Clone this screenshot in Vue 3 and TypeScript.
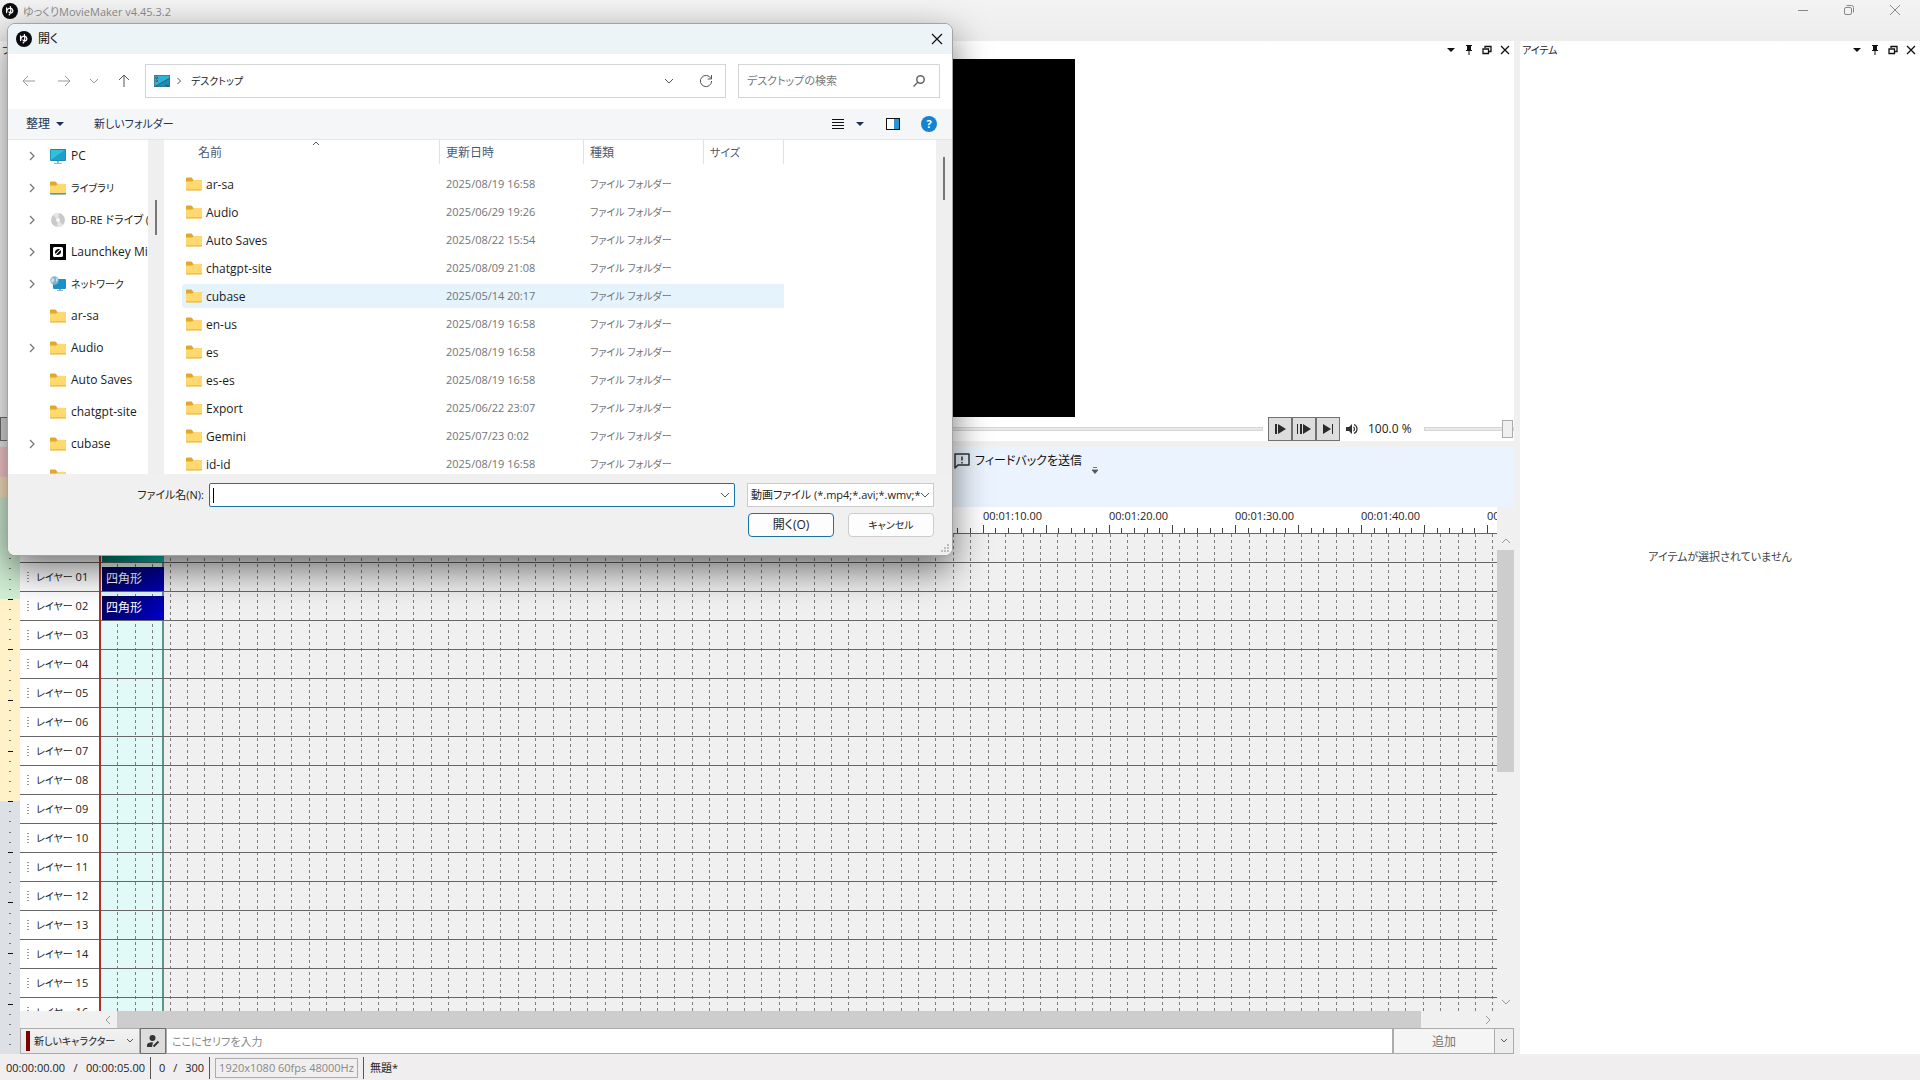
<script setup lang="ts">
import { ref } from 'vue'

interface TreeNode { label: string; icon: string; expandable: boolean; size?: string }
interface FileRow { name: string; date: string }

const tree: TreeNode[] = [
  { label: 'PC', icon: 'pc', expandable: true },
  { label: 'ライブラリ', icon: 'library', expandable: true, size: 'kana' },
  { label: 'BD-RE ドライブ (E:)', icon: 'disc', expandable: true, size: 'mixed' },
  { label: 'Launchkey Mini', icon: 'launchkey', expandable: true },
  { label: 'ネットワーク', icon: 'network', expandable: true, size: 'kana' },
  { label: 'ar-sa', icon: 'folder', expandable: false },
  { label: 'Audio', icon: 'folder', expandable: true },
  { label: 'Auto Saves', icon: 'folder', expandable: false },
  { label: 'chatgpt-site', icon: 'folder', expandable: false },
  { label: 'cubase', icon: 'folder', expandable: true },
  { label: '', icon: 'folder', expandable: false },
]

const files: FileRow[] = [
  { name: 'ar-sa', date: '2025/08/19 16:58' },
  { name: 'Audio', date: '2025/06/29 19:26' },
  { name: 'Auto Saves', date: '2025/08/22 15:54' },
  { name: 'chatgpt-site', date: '2025/08/09 21:08' },
  { name: 'cubase', date: '2025/05/14 20:17' },
  { name: 'en-us', date: '2025/08/19 16:58' },
  { name: 'es', date: '2025/08/19 16:58' },
  { name: 'es-es', date: '2025/08/19 16:58' },
  { name: 'Export', date: '2025/06/22 23:07' },
  { name: 'Gemini', date: '2025/07/23 0:02' },
  { name: 'id-id', date: '2025/08/19 16:58' },
]
const hovered = ref('cubase')

const layers = Array.from({ length: 17 }, (_, i) => String(i).padStart(2, '0'))
const clips: Record<string, { text: string; kind: string }> = {
  '00': { text: '', kind: 'teal' },
  '01': { text: '四角形', kind: 'blue' },
  '02': { text: '四角形', kind: 'blue deep' },
}

// Ruler: one second is 12.61px, labelled every ten seconds
const secondWidth = 12.61
const ticks = Array.from({ length: 112 }, (_, s) => ({
  x: Math.round(80 + s * secondWidth),
  major: s % 5 === 0,
}))
const labels = Array.from({ length: 12 }, (_, i) => {
  const s = i * 10
  const mm = String(Math.floor(s / 60)).padStart(2, '0')
  const ss = String(s % 60).padStart(2, '0')
  return { x: Math.round(80 + s * secondWidth), text: `00:${mm}:${ss}.00` }
})
const gridLines = Array.from({ length: 81 }, (_, i) => Math.round(1 + i * 17.406))

const meterTicks = Array.from({ length: 62 }, (_, i) => ({
  y: Math.round(i * 10.12),
  major: i % 5 === 0,
}))

const fileName = ref('')
const serif = ref('')
</script>

<template>
  <div class="app">
    <header class="titlebar">
      <svg class="logo" viewBox="0 0 16 16"><circle cx="8" cy="8" r="8" fill="#0b0b0d" /><path d="M4.600 5v4.500M4.600 9.500c0-3 2-4.500 4-4.300 2.600.3 3.200 4.600.3 4.800-1.400 0-2-1-2-1M8.400 3.600c.7 3 .6 6-1.200 8.200" fill="none" stroke="#fff" stroke-width="1.300" stroke-linecap="round" /></svg>
      <h1>ゆっくりMovieMaker v4.45.3.2</h1>
      <div class="window-buttons">
        <button aria-label="最小化"><svg viewBox="0 0 12 12"><path d="M1 6.500h10" /></svg></button>
        <button aria-label="元に戻す"><svg viewBox="0 0 12 12"><rect x="1.500" y="3.500" width="7" height="7" rx="1.500" /><path d="M3.500 1.500h5a2 2 0 0 1 2 2v5" /></svg></button>
        <button aria-label="閉じる"><svg viewBox="0 0 12 12"><path d="M1 1l10 10M11 1L1 11" /></svg></button>
      </div>
    </header>

    <main class="workspace">
      <div class="left-side">
        <section class="panel preview">
          <div class="panel-head">
            <h2>プレビュー</h2>
            <button aria-label="メニュー"><svg viewBox="0 0 10 10"><path d="M1 3h8L5 7z" fill="#111" /></svg></button>
            <button aria-label="固定"><svg viewBox="0 0 10 10"><path d="M2 0h6v1H7v4h1v1H2V5h1V1H2zM4.500 6h1v4h-1z" fill="#111" /></svg></button>
            <button aria-label="フロート"><svg viewBox="0 0 10 10"><path d="M3 3V1.500h6v5H7M1 4h5.500v4.500H1z" fill="none" stroke="#111" stroke-width="1.300" /></svg></button>
            <button aria-label="閉じる"><svg viewBox="0 0 10 10"><path d="M1 1l8 8M9 1L1 9" stroke="#111" stroke-width="1.300" /></svg></button>
          </div>
          <div class="stage"><div class="video"></div></div>
          <div class="player">
            <button class="play" aria-label="再生"><svg viewBox="0 0 14 14"><path d="M3 2v10l8-5z" fill="#333" /></svg></button>
            <input class="seek" type="range" min="0" max="300" value="0" aria-label="再生位置" />
            <div class="steps">
              <button class="play" aria-label="次のフレーム"><svg viewBox="0 0 14 14"><path d="M2 2h2v10H2zM5 2l8 5-8 5z" fill="#2b2b2b" /></svg></button>
              <button class="play" aria-label="早送り"><svg viewBox="0 0 14 14"><path d="M0 2h1v10H0zM3 2h2v10H3zM6 2l8 5-8 5z" fill="#2b2b2b" /></svg></button>
              <button class="play" aria-label="末尾へ"><svg viewBox="0 0 14 14"><path d="M2 2l8 5-8 5zM11 2h1v10h-1z" fill="#2b2b2b" /></svg></button>
            </div>
            <svg class="speaker" viewBox="0 0 12 12"><path d="M0 4h3l3-3v10L3 8H0z" fill="#333" /><path d="M7.500 4c1.300 1 1.300 3 0 4M8 1.500c4 1.500 4 7.500 0 9" fill="none" stroke="#333" stroke-width="1.200" /></svg>
            <span class="volume-text">100.0 %</span>
            <input class="volume" type="range" min="0" max="100" value="100" aria-label="音量" />
          </div>
        </section>

        <section class="timeline">
          <div class="meter">
            <div class="band pink"></div>
            <div class="band orange"></div>
            <div class="band green"></div>
            <div class="band yellow"></div>
            <div class="band gray"></div>
            <svg class="meter-ticks"><line v-for="t in meterTicks" :key="t.y" :x1="t.major ? 8 : 9" :x2="t.major ? 13 : 11" :y1="t.y + 0.5" :y2="t.y + 0.5" :stroke="t.major ? '#111' : '#777'" /></svg>
          </div>
          <div class="timeline-body">
            <div class="toolbar">
              <button class="feedback">
                <svg viewBox="0 0 16 16"><path d="M1 15V1h14v11H4z" fill="none" stroke="#333" stroke-width="1.500" stroke-linejoin="round" /><path d="M8 3.500v4M8 9v1.500" stroke="#333" stroke-width="1.500" /></svg>
                フィードバックを送信
              </button>
              <svg class="overflow" viewBox="0 0 6 7"><path d="M1 .5h4M0 3h6L3 6.500z" stroke="#555" stroke-width=".8" fill="#555" /></svg>
            </div>
            <div class="track-area">
              <div class="tracks">
                <svg class="ruler">
                  <text v-for="l in labels" :key="l.text" :x="l.x" y="13">{{ l.text }}</text>
                  <line v-for="t in ticks" :key="t.x" :x1="t.x + 0.5" :x2="t.x + 0.5" :y1="t.major ? 18 : 21" y2="26" stroke="#444" />
                </svg>
                <div class="layers">
                  <svg class="grid">
                    <rect x="2" y="0" width="62" height="100%" fill="#e1faf8" />
                    <line v-for="x in gridLines" :key="x" :x1="x + 0.5" :x2="x + 0.5" y1="0" y2="100%" stroke="#7d7d7d" stroke-dasharray="3 3" />
                    <rect x="63" y="0" width="2" height="100%" fill="#5d948c" />
                  </svg>
                  <div v-for="n in layers" :key="n" class="layer">
                    <div class="layer-label"><span class="grip"><i></i><i></i><i></i><i></i></span><span class="kana">レイヤー</span><span>{{ n }}</span></div>
                    <div class="lane"><div v-if="clips[n]" class="clip" :class="clips[n].kind">{{ clips[n].text }}</div></div>
                  </div>
                  <div class="playhead"></div>
                </div>
              </div>
              <div class="vscroll">
                <svg viewBox="0 0 10 10"><path d="M1 7l4-4 4 4" /></svg>
                <div class="vthumb"></div>
                <div class="fill"></div>
                <svg viewBox="0 0 10 10"><path d="M1 3l4 4 4-4" /></svg>
              </div>
            </div>
            <div class="hscroll">
              <svg viewBox="0 0 10 10"><path d="M7 1L3 5l4 4" /></svg>
              <div class="hthumb"></div>
              <svg viewBox="0 0 10 10"><path d="M3 1l4 4-4 4" /></svg>
            </div>
            <form class="serif-row" @submit.prevent>
              <button type="button" class="character"><i class="swatch"></i><span class="kana">新しいキャラクター</span><svg viewBox="0 0 8 8"><path d="M1 2l3 3 3-3" /></svg></button>
              <button type="button" class="edit-character" aria-label="キャラクター編集"><svg viewBox="0 0 14 14"><circle cx="6.500" cy="4" r="3" fill="#333" /><path d="M1 13V11c0-2 3-3 6-2.700L6 13z" fill="#333" /><path d="M7.500 12.500l5-5" stroke="#333" stroke-width="2" /></svg></button>
              <input v-model="serif" type="text" placeholder="ここにセリフを入力" aria-label="セリフ" />
              <button class="add">追加</button>
              <button type="button" class="add-more" aria-label="追加メニュー"><svg viewBox="0 0 8 8"><path d="M1 2l3 3 3-3" /></svg></button>
            </form>
          </div>
        </section>
      </div>

      <aside class="panel items">
        <div class="panel-head">
          <h2>アイテム</h2>
          <button aria-label="メニュー"><svg viewBox="0 0 10 10"><path d="M1 3h8L5 7z" fill="#111" /></svg></button>
          <button aria-label="固定"><svg viewBox="0 0 10 10"><path d="M2 0h6v1H7v4h1v1H2V5h1V1H2zM4.500 6h1v4h-1z" fill="#111" /></svg></button>
          <button aria-label="フロート"><svg viewBox="0 0 10 10"><path d="M3 3V1.500h6v5H7M1 4h5.500v4.500H1z" fill="none" stroke="#111" stroke-width="1.300" /></svg></button>
          <button aria-label="閉じる"><svg viewBox="0 0 10 10"><path d="M1 1l8 8M9 1L1 9" stroke="#111" stroke-width="1.300" /></svg></button>
        </div>
        <p class="empty">アイテムが選択されていません</p>
      </aside>
    </main>

    <footer class="status">
      <span class="cell time"><span>00:00:00.00</span><span>/</span><span>00:00:05.00</span></span>
      <span class="cell frames"><span>0</span><span>/</span><span>300</span></span>
      <span class="cell format"><span class="format-box">1920x1080 60fps 48000Hz</span></span>
      <span class="cell project">無題*</span>
    </footer>

    <div class="dialog" role="dialog" aria-label="開く">
      <div class="dialog-title">
        <svg class="logo" viewBox="0 0 16 16"><circle cx="8" cy="8" r="8" fill="#0b0b0d" /><path d="M4.600 5v4.500M4.600 9.500c0-3 2-4.500 4-4.300 2.600.3 3.200 4.600.3 4.800-1.400 0-2-1-2-1M8.400 3.600c.7 3 .6 6-1.200 8.200" fill="none" stroke="#fff" stroke-width="1.300" stroke-linecap="round" /></svg>
        <span>開く</span>
        <button aria-label="閉じる"><svg viewBox="0 0 12 12"><path d="M1 1l10 10M11 1L1 11" stroke="#111" stroke-width="1.200" /></svg></button>
      </div>

      <div class="nav">
        <div class="nav-buttons">
          <button aria-label="戻る"><svg class="dim" viewBox="0 0 14 14"><path d="M13 7H1M6 2L1 7l5 5" /></svg></button>
          <button aria-label="進む"><svg class="dim" viewBox="0 0 14 14"><path d="M1 7h12M8 2l5 5-5 5" /></svg></button>
          <button class="recent" aria-label="最近表示した場所"><svg class="dim" viewBox="0 0 14 14"><path d="M3 5l4 4 4-4" /></svg></button>
          <button aria-label="上へ"><svg viewBox="0 0 14 14"><path d="M7 13V1M2 6l5-5 5 5" /></svg></button>
        </div>
        <div class="address">
          <svg class="desk" viewBox="0 0 16 12"><rect width="16" height="12" rx="1" fill="#27b5dc" /><path d="M0 12L16 3v8a1 1 0 0 1-1 1z" fill="#148fc8" /><path d="M2 2h1.500v1.500H2zM2 5h1.500v1.500H2zM11.500 10h1v1h-1zM13.500 10h1v1h-1z" fill="#fff" /></svg>
          <svg class="crumb" viewBox="0 0 6 8"><path d="M1.500 1l3 3-3 3" /></svg>
          <span class="kana">デスクトップ</span>
          <button aria-label="履歴"><svg viewBox="0 0 14 14"><path d="M3 5l4 4 4-4" /></svg></button>
          <button aria-label="更新"><svg viewBox="0 0 14 14"><path d="M12 4.500A5.600 5.600 0 1 0 12.600 7M12.500 1v4H8.600" /></svg></button>
        </div>
        <div class="search">
          <input type="text" placeholder="デスクトップの検索" aria-label="検索" />
          <svg viewBox="0 0 14 14"><circle cx="8.500" cy="5.500" r="3.700" /><path d="M6 8L1.500 12.500" /></svg>
        </div>
      </div>

      <div class="commands">
        <button>整理<svg viewBox="0 0 8 8"><path d="M0 2h8L4 6z" /></svg></button>
        <button class="new-folder">新しいフォルダー</button>
        <span class="fill"></span>
        <button class="view" aria-label="表示"><svg class="lines" viewBox="0 0 12 12"><path d="M0 1.500h12M0 4.500h12M0 7.500h12M0 10.500h12" stroke="#111" /></svg><svg viewBox="0 0 8 8"><path d="M0 2h8L4 6z" /></svg></button>
        <button class="pane" aria-label="プレビュー ウィンドウ"><svg viewBox="0 0 14 12"><rect x=".5" y=".5" width="13" height="11" fill="#fff" stroke="#111" /><rect x="8" y="1" width="5" height="10" fill="#2b93d8" /></svg></button>
        <button class="help" aria-label="ヘルプ">?</button>
      </div>

      <div class="browser">
        <ul class="tree">
          <li v-for="node in tree" :key="node.label">
            <svg class="chev" viewBox="0 0 6 10"><path v-if="node.expandable" d="M1 1l4 4-4 4" /></svg>
            <svg v-if="node.icon === 'folder' || node.icon === 'library'" class="ico" viewBox="0 0 16 16"><path d="M0 2.500a1 1 0 0 1 1-1h4.500L7.500 4H16v3H0z" fill="#e3a72b" /><path d="M0 5.500h6L8 4h7a1 1 0 0 1 1 1v8.500a.8.800 0 0 1-.8.800H.8a.8.800 0 0 1-.8-.8z" fill="#ffd970" /><path d="M0 13.300h16v.4a.8.800 0 0 1-.8.800H.8a.8.800 0 0 1-.8-.8z" :fill="node.icon === 'library' ? '#2187b8' : '#e9b548'" /></svg>
            <svg v-else-if="node.icon === 'pc'" class="ico" viewBox="0 0 16 16"><rect y="1" width="16" height="12" rx="1" fill="#1787b0" /><path d="M.7 12.300V2h14.600z" fill="#2fc0dc" /><path d="M.7 12.300L15.300 2v10.300z" fill="#1f9fce" /><path d="M7 13h2v2h3v1H4v-1h3z" fill="#a9b3ba" /></svg>
            <svg v-else-if="node.icon === 'disc'" class="ico" viewBox="0 0 16 16"><circle cx="8" cy="8" r="7" fill="#c9c9c9" /><path d="M8 8L3 3a7 7 0 0 1 6-2zM8 8l5 5a7 7 0 0 1-6 2z" fill="#e6e6e6" /><circle cx="8" cy="8" r="2" fill="#f8f8f8" /></svg>
            <svg v-else-if="node.icon === 'launchkey'" class="ico" viewBox="0 0 16 16"><rect width="16" height="16" fill="#000" /><rect x="3" y="3" width="10" height="10" rx="1.500" fill="#fff" /><path d="M5 8.500C5 6 7 4.500 10 5l-4.500 5zM11 7.500C11 10 9 11.500 6 11l4.500-5z" fill="#000" /></svg>
            <svg v-else class="ico" viewBox="0 0 16 16"><rect x="3" y="3" width="13" height="10" rx="1" fill="#1c8fc4" /><path d="M9 13h2v1h2v1H7v-1h2z" fill="#9aa8b4" /><circle cx="4.500" cy="4.500" r="4.200" fill="#7fb6cf" /><path d="M2 2c2 0 3 1 2 3L2.500 7 1 5zM6 1l2 3-2 2z" fill="#c9e3ee" /></svg>
            <span :class="node.size">{{ node.label }}</span>
          </li>
        </ul>
        <div class="tree-scroll"><i></i></div>
        <div class="list">
          <svg class="sort" viewBox="0 0 8 5"><path d="M1 4l3-3 3 3" /></svg>
          <table>
            <colgroup><col class="c-name" /><col class="c-date" /><col class="c-type" /><col class="c-size" /></colgroup>
            <thead><tr><th scope="col">名前</th><th scope="col">更新日時</th><th scope="col">種類</th><th scope="col" class="mixed">サイズ</th></tr></thead>
            <tbody>
              <tr v-for="f in files" :key="f.name" :class="{ hover: f.name === hovered }">
                <td class="name"><svg class="ico" viewBox="0 0 16 16"><path d="M0 2.500a1 1 0 0 1 1-1h4.500L7.500 4H16v3H0z" fill="#e3a72b" /><path d="M0 5.500h6L8 4h7a1 1 0 0 1 1 1v8.500a.8.800 0 0 1-.8.800H.8a.8.800 0 0 1-.8-.8z" fill="#ffd970" /><path d="M0 13.300h16v.4a.8.800 0 0 1-.8.800H.8a.8.800 0 0 1-.8-.8z" fill="#e9b548" /></svg>{{ f.name }}</td>
                <td>{{ f.date }}</td>
                <td class="kana">ファイル フォルダー</td>
                <td></td>
              </tr>
            </tbody>
          </table>
        </div>
        <div class="list-scroll"><i></i></div>
      </div>

      <div class="dialog-foot">
        <div class="field-row">
          <label for="file-name">ファイル名(N):</label>
          <div class="combo">
            <i class="caret"></i>
            <input id="file-name" v-model="fileName" type="text" />
            <svg viewBox="0 0 10 10"><path d="M1 3l4 4 4-4" /></svg>
          </div>
          <div class="filter">
            <select aria-label="ファイルの種類"><option>動画ファイル (*.mp4;*.avi;*.wmv;*</option></select>
            <svg viewBox="0 0 10 10"><path d="M1 3l4 4 4-4" /></svg>
          </div>
        </div>
        <div class="actions">
          <button class="primary">開く(O)</button>
          <button class="kana">キャンセル</button>
        </div>
        <svg class="resize" viewBox="0 0 10 10"><path d="M7 0h2v2H7zM4 3h2v2H4zM7 3h2v2H7zM1 6h2v2H1zM4 6h2v2H4zM7 6h2v2H7z" fill="#bdbdbd" /></svg>
      </div>
    </div>
  </div>
</template>

<style>
body { margin: 0; background: #f0f0f0; }
</style>

<style scoped>
.app, .app * { box-sizing: border-box; }
.app {
  position: relative;
  display: flex;
  flex-direction: column;
  height: 100vh;
  overflow: hidden;
  font-family: "Open Sans", "Noto Sans CJK JP", sans-serif;
  font-feature-settings: "palt";
  font-size: 12px;
  line-height: 16px;
  color: #222;
  background: #f0f0f0;
}
h1, h2, p, ul { margin: 0; padding: 0; font-weight: 400; }
ul { list-style: none; }
button, input, select { font: inherit; font-feature-settings: inherit; color: inherit; margin: 0; padding: 0; border: 0; border-radius: 0; background: none; outline: 0; }
svg { display: block; flex: none; }
.fill { flex: 1; }
.logo { width: 16px; height: 16px; }
.app .kana { font-size: 10px; }
.app .mixed { font-size: 11px; }

.titlebar { display: flex; align-items: flex-start; height: 41px; padding: 3px 2px; background: linear-gradient(#f3f3f3, #ededed); }
.titlebar h1 { flex: 1; margin-left: 5px; font-size: 11px; line-height: 18px; color: #8c8c8c; }
.window-buttons { display: flex; }
.window-buttons button { display: flex; justify-content: center; width: 46px; padding-top: 1px; }
.window-buttons svg { width: 12px; height: 12px; fill: none; stroke: #888; }

.workspace { flex: 1; display: flex; gap: 6px; min-height: 0; }
.left-side { flex: 1; display: flex; flex-direction: column; min-width: 0; }
.panel { background: #fff; }
.panel-head { display: flex; align-items: center; gap: 8px; height: 18px; padding: 0 4px 0 2px; }
.panel-head h2 { flex: 1; font-size: 10px; }
.panel-head svg { width: 10px; height: 10px; }
.preview { height: 400px; margin-bottom: 6px; }
.stage { display: flex; justify-content: center; height: 358px; }
.video { aspect-ratio: 16 / 9; background: #000; }
.player { display: flex; align-items: center; height: 24px; }
.play { display: flex; align-items: center; justify-content: center; width: 24px; height: 24px; border: 1px solid #707070; background: #ddd; }
.play svg { width: 14px; height: 14px; }
.steps { display: flex; margin-left: 5px; }
input[type="range"] { appearance: none; height: 18px; }
input[type="range"]::-webkit-slider-runnable-track { height: 4px; border: 1px solid #d6d6d6; background: #e7eaea; }
.seek { flex: 1; min-width: 0; }
.seek::-webkit-slider-thumb { appearance: none; width: 11px; height: 18px; margin-top: -8px; border: 1px solid #acacac; background: #f0f0f0; }
.speaker { width: 12px; height: 12px; margin-left: 6px; }
.volume-text { width: 66px; padding-left: 10px; }
.volume { width: 90px; }
.volume::-webkit-slider-thumb { appearance: none; width: 11px; height: 18px; margin-top: -8px; border: 1px solid #acacac; background: #f0f0f0; }

.timeline { flex: 1; display: flex; min-height: 0; }
.meter { position: relative; display: flex; flex-direction: column; width: 20px; }
.pink { height: 30px; background: #ffcfd0; }
.orange { height: 21px; background: #ffe8c4; }
.green { height: 101px; background: #d2f0d6; }
.yellow { height: 202px; background: #fff1c8; }
.gray { flex: 1; background: #dde1e6; }
.meter-ticks { position: absolute; top: 0; left: 0; width: 20px; height: 100%; }
.timeline-body { flex: 1; display: flex; flex-direction: column; min-width: 0; }
.toolbar { display: flex; align-items: flex-start; height: 60px; padding: 4px 0 0 934px; background: #ebf4fe; }
.feedback { display: flex; align-items: center; gap: 5px; height: 20px; white-space: nowrap; color: #111; }
.feedback svg { width: 16px; height: 16px; }
.overflow { width: 6px; height: 7px; margin: 16px 0 0 10px; }
.track-area { flex: 1; display: flex; min-height: 0; }
.tracks { flex: 1; display: flex; flex-direction: column; min-width: 0; }
.ruler { width: 100%; height: 27px; border-bottom: 1px solid #666; background: #fff; font-size: 11px; fill: #222; }
.layers { position: relative; flex: 1; min-height: 0; overflow: hidden; }
.grid { position: absolute; top: 0; left: 79px; width: calc(100% - 79px); height: 100%; }
.layer { position: relative; display: flex; height: 29px; border-bottom: 1px solid #666; }
.layer-label { display: flex; align-items: center; gap: 3px; width: 79px; padding-left: 7px; background: #fff; font-size: 11px; }
.grip { display: flex; flex-direction: column; gap: 2px; width: 6px; }
.grip i { width: 2px; height: 1px; background: #999; }
.lane { flex: 1; padding: 4px 0 0 3px; }
.clip { width: 62px; height: 24px; padding: 4px; color: #fff; }
.blue { background: linear-gradient(135deg, #000050, #0000b8); }
.deep { background: linear-gradient(135deg, #00004c, #0000d0); }
.teal { background: linear-gradient(90deg, #007a66, #00c8b4); }
.playhead { position: absolute; top: 0; left: 79px; width: 2px; height: 100%; background: #a83232; }
.vscroll { display: flex; flex-direction: column; align-items: center; width: 17px; padding: 29px 0 4px; }
.vscroll svg, .hscroll svg { width: 10px; height: 10px; fill: none; stroke: #999; }
.vthumb { width: 17px; height: 222px; margin-top: 4px; background: #cdcdcd; }
.hscroll { display: flex; align-items: center; height: 17px; padding: 0 21px 0 83px; }
.hthumb { flex: 1; height: 17px; margin: 0 62px 0 4px; background: #cdcdcd; }
.serif-row { display: flex; height: 26px; }
.serif-row svg { fill: none; stroke: #555; stroke-width: 1; }
.character { display: flex; align-items: center; width: 120px; padding: 0 5px; border: 1px solid #acacac; background: linear-gradient(#f2f2f2, #e8e8e8); }
.character span { flex: 1; margin-left: 4px; text-align: left; white-space: nowrap; }
.character svg, .add-more svg { width: 8px; height: 8px; }
.swatch { width: 4px; height: 20px; background: #800000; }
.edit-character { display: flex; align-items: center; justify-content: center; width: 26px; border: 1px solid #707070; background: #ddd; }
.edit-character svg { width: 14px; height: 14px; stroke: none; }
.serif-row input { flex: 1; min-width: 0; padding: 1px 5px 0; border: 1px solid #acacac; background: #fff; font-size: 11px; }
input::placeholder { color: #888; opacity: 1; }
.add { width: 102px; padding-top: 2px; border: 1px solid #acacac; background: #f5f5f5; color: #777; }
.add-more { display: flex; align-items: center; justify-content: center; width: 19px; border: 1px solid #acacac; border-left: 0; background: #ededed; }

.items { display: flex; flex-direction: column; width: 400px; }
.empty { flex: 1; display: flex; align-items: center; justify-content: center; font-size: 11px; color: #444; }

.status { display: flex; align-items: stretch; height: 26px; padding: 3px 0 1px; background: #f0eeee; font-size: 11px; }
.cell { display: flex; align-items: center; border-right: 1px solid #555; }
.time { justify-content: space-between; width: 151px; padding: 0 5px 0 6px; }
.frames { justify-content: space-between; width: 59px; padding: 0 5px 0 8px; }
.format { width: 154px; padding: 0 5px; }
.format-box { flex: 1; height: 20px; border: 1px solid #acacac; color: #8a8a8a; line-height: 18px; text-align: center; white-space: nowrap; }
.project { border: 0; padding-left: 6px; }

.dialog {
  position: absolute;
  top: 23px;
  left: 7px;
  display: flex;
  flex-direction: column;
  width: 946px;
  border: 1px solid #a3a3a3;
  border-radius: 8px;
  background: #fff;
  overflow: hidden;
  box-shadow: 0 14px 36px rgba(0, 0, 0, 0.55);
}
.dialog-title { display: flex; align-items: center; height: 30px; padding: 0 9px 0 8px; background: #edf4f8; }
.dialog-title span { flex: 1; margin-left: 6px; color: #111; }
.dialog-title svg:not(.logo) { width: 12px; height: 12px; }
.nav { display: flex; align-items: center; height: 55px; padding: 0 12px 2px 14px; }
.nav svg { fill: none; stroke: #555; }
.nav .dim { stroke: #999; }
.nav-buttons { display: flex; width: 123px; gap: 21px; }
.nav-buttons button { width: 14px; }
.nav-buttons .recent { margin: 0 -5px; }
.nav-buttons svg { width: 14px; height: 14px; }
.address { flex: 1; display: flex; align-items: center; height: 34px; padding: 0 12px 0 8px; border: 1px solid #d4d4d4; }
.address span { flex: 1; color: #222; }
.address button { margin-left: 23px; }
.address button svg { width: 14px; height: 14px; }
.desk { width: 16px; height: 12px; }
.crumb { width: 6px; height: 8px; margin: 0 9px 0 6px; }
.search { display: flex; align-items: center; width: 202px; height: 34px; margin-left: 12px; padding: 0 13px 0 8px; border: 1px solid #d4d4d4; }
.search input { flex: 1; min-width: 0; font-size: 11px; }
.search input::placeholder { color: #777; }
.search svg { width: 14px; height: 14px; stroke: #666; stroke-width: 1.5; }
.commands { display: flex; align-items: center; height: 31px; padding: 0 15px 0 18px; border-bottom: 1px solid #e3e6e8; background: #f4f6f8; color: #1f3350; }
.commands button { display: flex; align-items: center; gap: 6px; }
.commands button svg { width: 8px; height: 8px; fill: #1f3350; }
.commands .new-folder { margin-left: 30px; font-size: 11px; }
.commands .view { gap: 12px; }
.commands .view .lines { width: 12px; height: 12px; }
.commands .pane { margin-left: 22px; }
.commands .pane svg { width: 14px; height: 12px; }
.commands .help { justify-content: center; width: 16px; height: 16px; margin-left: 21px; border-radius: 8px; background: #1583cf; color: #fff; font-weight: 700; font-size: 11px; }
.browser { display: flex; height: 334px; }
.tree { width: 140px; overflow: hidden; }
.tree li { display: flex; align-items: center; height: 32px; padding-left: 21px; white-space: nowrap; color: #1c1c1c; }
.chev { width: 6px; height: 10px; margin-right: 15px; fill: none; stroke: #777; stroke-width: 1.3; }
.ico { width: 16px; height: 16px; }
.tree span { margin-left: 5px; }
.tree-scroll { display: flex; justify-content: center; width: 16px; padding-top: 60px; background: #efefef; }
.tree-scroll i { width: 2px; height: 35px; background: #777; }
.list { position: relative; flex: 1; padding-left: 18px; overflow: hidden; }
.sort { position: absolute; top: 1px; left: 148px; width: 8px; height: 5px; fill: none; stroke: #555; }
table { table-layout: fixed; width: 602px; border-collapse: separate; border-spacing: 0; }
.c-name { width: 258px; }
.c-date { width: 144px; }
.c-type { width: 120px; }
.c-size { width: 80px; }
th { height: 24px; padding: 1px 0 0 6px; border-right: 1px solid #e2e2e2; text-align: left; font-weight: 400; color: #4a5a70; }
th:first-child { padding-left: 16px; }
tbody::before { content: ""; display: block; height: 6px; }
td { height: 28px; padding: 0 0 0 6px; border: solid transparent; border-width: 2px 0; background-clip: padding-box; color: #747474; font-size: 11px; white-space: nowrap; }
td.name { padding-left: 4px; color: #1c1c1c; font-size: 12px; }
.name svg { display: inline-block; margin-right: 4px; vertical-align: -3px; }
.hover td { background-color: #e5f3fd; }
.hover td:first-child { border-radius: 4px 0 0 4px; }
.list-scroll { display: flex; justify-content: center; width: 16px; padding-top: 17px; background: #efefef; }
.list-scroll i { width: 2px; height: 43px; background: #777; }
.dialog-foot { position: relative; height: 81px; padding: 9px 18px 0 0; background: #f0f0f0; color: #222; }
.field-row { display: flex; align-items: center; font-size: 11px; }
.field-row label { flex: none; width: 196px; text-align: right; }
.combo { flex: none; display: flex; align-items: center; width: 526px; height: 24px; margin-left: 5px; padding: 0 4px 0 3px; border: 1px solid #1a72a5; border-radius: 2px; background: #fff; }
.combo input { flex: 1; }
.combo svg, .filter svg { width: 10px; height: 10px; fill: none; stroke: #555; }
.caret { width: 1px; height: 15px; background: #000; }
.filter { display: flex; align-items: center; flex: 1; min-width: 0; height: 24px; margin-left: 12px; padding: 0 3px; border: 1px solid #ccc; background: #fff; }
.filter select { flex: 1; min-width: 0; appearance: none; overflow: hidden; }
.actions { display: flex; justify-content: flex-end; gap: 14px; margin-top: 6px; }
.actions button { width: 86px; height: 24px; border: 1px solid #ccc; border-radius: 4px; background: #fdfdfd; }
.actions .primary { border-color: #1a72a5; }
.resize { position: absolute; right: 2px; bottom: 1px; width: 10px; height: 10px; }
</style>
